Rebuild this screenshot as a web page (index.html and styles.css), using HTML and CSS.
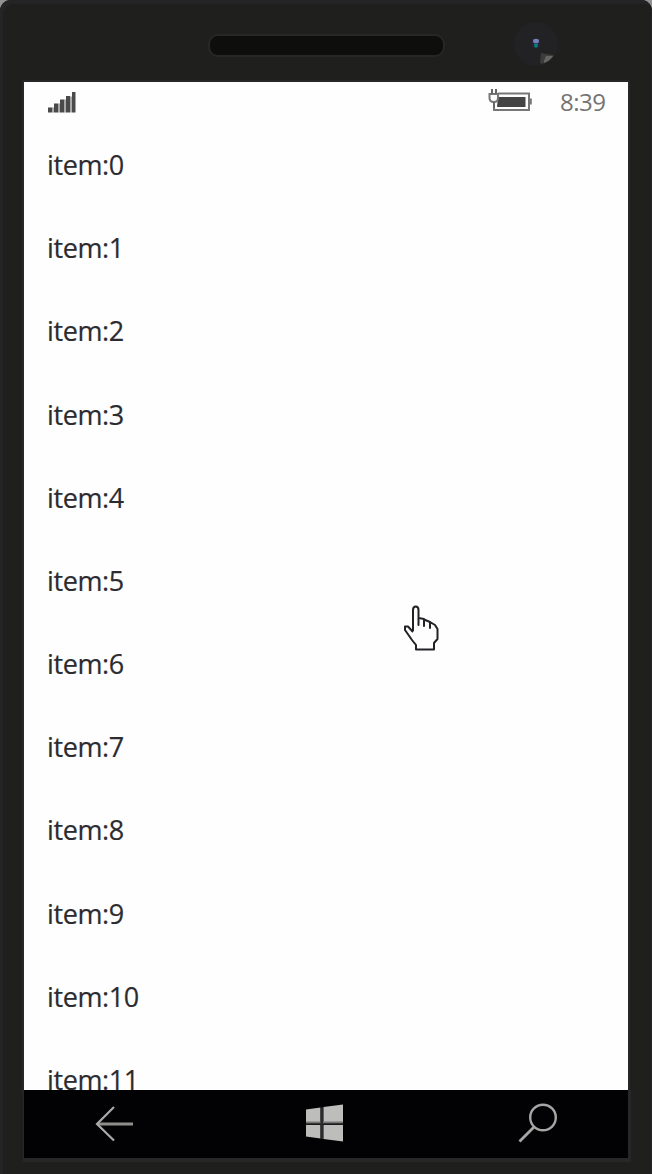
FILE: index.html
```html
<!DOCTYPE html>
<html lang="en">
<head>
<meta charset="utf-8">
<title>Phone</title>
<link rel="stylesheet" href="styles.css">
</head>
<body>
<div class="phone">
  <header class="bezel">
    <div class="speaker"></div>
    <svg class="camera" viewBox="0 0 46 46">
      <circle cx="23" cy="23" r="22" fill="#222225"/>
      <path d="M27 41L28 32L33 33L41 34Q37 41 28 43Z" fill="#3c3c3b"/>
      <path d="M31 40L33 35L40 35Q37 40 31 42Z" fill="#656562"/>
      <circle cx="23" cy="22" r="4.500" fill="#28243e"/>
      <ellipse cx="23" cy="20" rx="3" ry="2.300" fill="#7480b5"/>
      <ellipse cx="23" cy="24.500" rx="2" ry="2.300" fill="#087c75"/>
    </svg>
  </header>
  <main class="screen">
    <div class="status">
      <svg class="signal" viewBox="0 0 31 24">
        <path d="M2 21.500v-5h4.500v5zM8 21.500v-9h4.500v9zM14 21.500v-13h4.500v13zM20 21.500v-16.500h4v16.500zM26 21.500v-20.500h3.500v20.500z" fill="#4a4a4a"/>
        <path d="M6.500 21.500v-5h1.500v5zM12.500 21.500v-9h1.500v9zM18.500 21.500v-13h1.500v13zM24 21.500v-16h2v16z" fill="#aaa"/>
      </svg>
      <svg class="battery" viewBox="0 0 48 26">
        <path d="M10 5.500H41V22H6V15" fill="none" stroke="#777" stroke-width="2"/>
        <path d="M42 10.500h1.800v6H42z" fill="#777"/>
        <path d="M10 9H37.500V19H9z" fill="#444"/>
        <path d="M1.500 6H10V10Q10 14 6 14Q1.500 14 1.500 10Z" fill="#fefefe" stroke="#777" stroke-width="2"/>
        <path d="M4 6V1M8 6V1M6 14V20" fill="none" stroke="#666" stroke-width="2"/>
      </svg>
      <span class="clock">8:39</span>
    </div>
    <ul class="list">
      <li>item:0</li><li>item:1</li><li>item:2</li><li>item:3</li><li>item:4</li><li>item:5</li>
      <li>item:6</li><li>item:7</li><li>item:8</li><li>item:9</li><li>item:10</li><li>item:11</li>
    </ul>
  </main>
  <nav class="nav">
    <svg class="back" viewBox="0 0 42 40"><path d="M39 20H4" stroke="#8e8e8a" stroke-width="3"/><path d="M20 3L3 20L20 36.500" fill="none" stroke="#aaa" stroke-width="2.200"/></svg>
    <svg class="windows" viewBox="0 0 42 40"><path d="M2 5.500L16.500 3.500V18H2zM19.500 3L39 .5V18H19.500zM2 21H16.500V34.500L2 32.500zM19.500 21H39V37.500L19.500 35z" fill="#bdbdbb"/><path d="M2 17.500H39V19.500H2z" fill="#777"/><path d="M2 19.500H39V20.500H2z" fill="#333"/><path d="M16.500 3.500h2.500v31.500h-2.500z" fill="#2c2c2e"/></svg>
    <svg class="search" viewBox="0 0 44 44"><circle cx="27" cy="16.500" r="12.800" fill="none" stroke="#a6a6a4" stroke-width="2.400"/><path d="M18.500 25.500L3.500 40.500" stroke="#a6a6a4" stroke-width="2.800"/></svg>
  </nav>
  <svg class="cursor" viewBox="0 0 38 48"><path d="M10 27V6Q10 2.500 12.800 2.500Q15.500 2.500 15.500 6V21V14L21 15V22V15.500L27 18V24V18L32 21L34.500 25V35L31 39V45.500H13V41L9 36L2 26V22.500H5L10 28" fill="#fefefe" stroke="#222226" stroke-width="2" stroke-linejoin="round"/></svg>
</div>
</body>
</html>
```
FILE: styles.css
```css
body {
  margin: 0;
  background: #929292;
  font-family: "Open Sans", "Noto Sans", sans-serif;
}
.phone {
  position: relative;
  box-sizing: border-box;
  width: 652px;
  height: 1174px;
  padding: 0 24px;
  overflow: hidden;
  border-radius: 11px 11px 0 0;
  background: #1f1f1d;
  box-shadow: inset 3px 4px 0 #242427, inset -1px 0 0 #242427;
}
.bezel {
  display: flex;
  height: 82px;
  align-items: flex-start;
}
.speaker {
  box-sizing: border-box;
  width: 237px;
  height: 23px;
  margin: 34px 0 0 184px;
  border: 2px solid #27272a;
  border-radius: 10px;
  background: #0e0e0c;
}
.camera {
  width: 46px;
  height: 46px;
  margin: 21px 0 0 68px;
}
.screen {
  width: 604px;
  height: 1008px;
  overflow: hidden;
  background: #fefefe;
  box-shadow: 0 0 0 2px #272729;
}
.status {
  display: flex;
  height: 41px;
  align-items: flex-start;
}
.signal {
  width: 31px;
  height: 24px;
  margin: 9px 0 0 22px;
}
.battery {
  width: 48px;
  height: 26px;
  margin: 6px 0 0 410.5px;
}
.clock {
  margin: 3px 0 0 24.5px;
  color: #747474;
  font-size: 24px;
  line-height: 34px;
  letter-spacing: -0.5px;
}
.list {
  margin: 0;
  padding: 0 0 0 23px;
  list-style: none;
}
.list li {
  height: 83.18px;
  color: #2c2c30;
  font-size: 27px;
  line-height: 83px;
  letter-spacing: -0.4px;
  -webkit-text-stroke: 0.2px #2c2c30;
}
.nav {
  position: relative;
  display: flex;
  width: 604px;
  height: 68px;
  background: #020204;
  box-shadow: 1px 2px 0 2px #272728;
}
.back {
  width: 42px;
  height: 40px;
  margin: 14px 0 0 70px;
}
.windows {
  width: 42px;
  height: 40px;
  margin: 14px 0 0 168px;
}
.search {
  width: 44px;
  height: 44px;
  margin: 11px 0 0 170px;
}
.cursor {
  position: absolute;
  left: 403px;
  top: 604px;
  width: 38px;
  height: 48px;
}
```
